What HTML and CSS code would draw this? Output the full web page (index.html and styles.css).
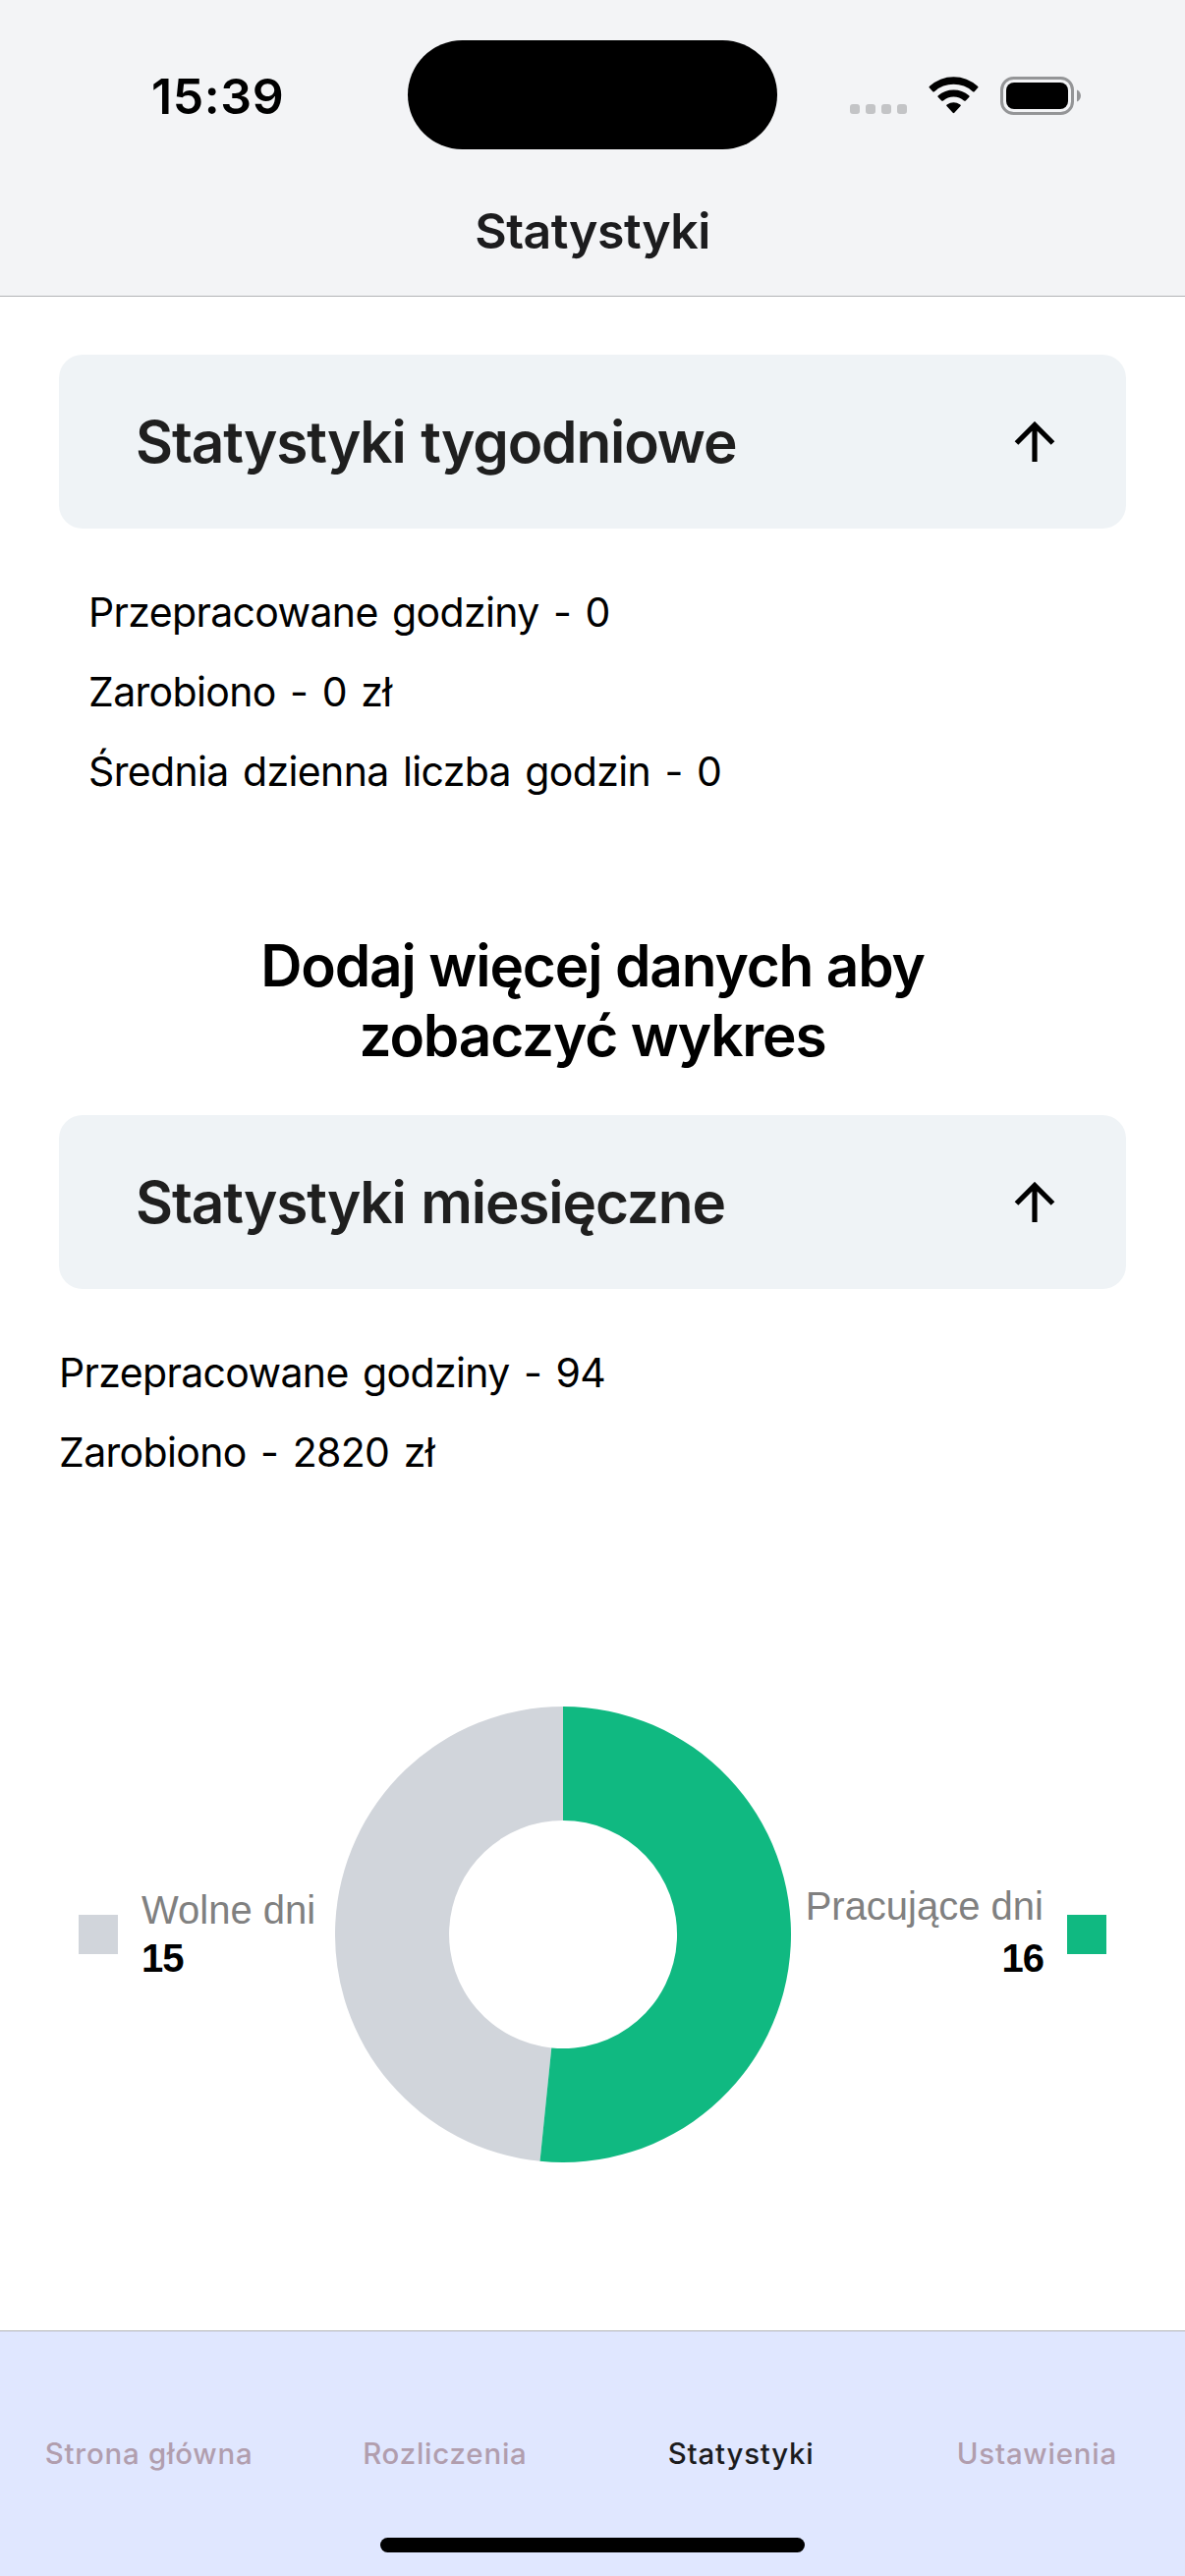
FILE: index.html
```html
<!DOCTYPE html>
<html lang="pl">
<head>
<meta charset="utf-8">
<title>Statystyki</title>
<link rel="stylesheet" href="styles.css">
</head>
<body>
<div class="screen">
  <header class="header">
    <div class="status-bar">
      <div class="status-left"><span class="time">15:39</span></div>
      <div class="island"></div>
      <div class="status-right">
        <svg class="signal" width="58" height="10" viewBox="0 0 58 10" fill="#c3c4c6"><rect width="10" height="10" rx="3"/><rect x="16" width="10" height="10" rx="3"/><rect x="32" width="10" height="10" rx="3"/><rect x="48" width="10" height="10" rx="3"/></svg>
        <svg class="wifi" width="52" height="38" viewBox="0 0 52 38"><path d="M1 11.5Q0 10.700 1 9.800A36 36 0 0 1 50 9.800Q51 10.700 50 11.500L46.700 15.200Q46 16 45 15.200A29 29 0 0 0 6 15.200Q5 16 4.300 15.200ZM9.800 21Q9 20.200 9.800 19.300A24 24 0 0 1 41.200 19.300Q42 20.200 41.200 21L37.800 24.500Q37 25.200 36 24.500A16 16 0 0 0 15 24.500Q14 25.200 13.200 24.500ZM18.500 30Q17.700 29.200 18.700 28.500A12 12 0 0 1 32.300 28.500Q33.300 29.200 32.500 30L26.300 36.800Q25.500 37.600 24.700 36.800Z"/></svg>
        <svg class="battery" width="83" height="40" viewBox="0 0 83 40"><rect x="1.500" y="1.500" width="72" height="36" rx="12" fill="none" stroke="#949597" stroke-width="3"/><rect x="6" y="6" width="63" height="27" rx="8"/><path d="M78 13.500C83.300 15.500 83.300 23.500 78 25.500Z" fill="#949597"/></svg>
      </div>
    </div>
    <h1 class="page-title">Statystyki</h1>
  </header>

  <main class="content">
    <section class="weekly">
      <div class="card">
        <h2 class="card-title">Statystyki tygodniowe</h2>
        <svg class="arrow" width="42" height="42" viewBox="0 0 42 42" fill="none" stroke="#000" stroke-width="5.200"><path d="M21 41V4M2.500 22 21 3.500 39.500 22"/></svg>
      </div>
      <ul class="stats stats-indented">
        <li>Przepracowane godziny - 0</li>
        <li>Zarobiono - 0 zł</li>
        <li>Średnia dzienna liczba godzin - 0</li>
      </ul>
      <p class="empty">Dodaj więcej danych aby<br>zobaczyć wykres</p>
    </section>

    <section class="monthly">
      <div class="card">
        <h2 class="card-title">Statystyki miesięczne</h2>
        <svg class="arrow" width="42" height="42" viewBox="0 0 42 42" fill="none" stroke="#000" stroke-width="5.200"><path d="M21 41V4M2.500 22 21 3.500 39.500 22"/></svg>
      </div>
      <ul class="stats">
        <li>Przepracowane godziny - 94</li>
        <li>Zarobiono - 2820 zł</li>
      </ul>
      <div class="chart">
        <span class="swatch swatch-free"></span>
        <div class="legend legend-free"><span class="legend-name">Wolne dni</span><span class="legend-value">15</span></div>
        <svg class="donut" width="464" height="464" viewBox="-232 -232 464 464">
          <path fill="#d1d5db" d="M0-232A232 232 0 0 0-23.470 230.810L-11.740 115.400A116 116 0 0 1 0-116Z"/>
          <path fill="#10b981" d="M0-232A232 232 0 1 1-23.470 230.810L-11.740 115.400A116 116 0 1 0 0-116Z"/>
        </svg>
        <div class="legend legend-work"><span class="legend-name">Pracujące dni</span><span class="legend-value">16</span></div>
        <span class="swatch swatch-work"></span>
      </div>
    </section>
  </main>

  <footer class="footer">
    <nav class="tabs">
      <a class="tab">Strona główna</a>
      <a class="tab">Rozliczenia</a>
      <a class="tab tab-active">Statystyki</a>
      <a class="tab">Ustawienia</a>
    </nav>
    <div class="home-indicator"></div>
  </footer>
</div>
</body>
</html>
```
FILE: styles.css
```css
* { box-sizing: border-box; margin: 0; padding: 0; }
body { background: #fff; color: #000; font-family: Inter, "Liberation Sans", sans-serif; }
.screen { width: 1206px; height: 2622px; display: flex; flex-direction: column; overflow: hidden; }

.header { height: 302px; background: #f3f4f6; border-bottom: 1px solid #b3b4b6; }
.status-bar { height: 195px; padding-top: 41px; display: grid; grid-template-columns: 415px 376px 415px; align-items: start; }
.status-left { padding-left: 154px; padding-top: 27px; }
.time { display: block; font-size: 50px; line-height: 60px; font-weight: 600; letter-spacing: 0.6px; }
.island { height: 111px; border-radius: 56px; background: #000; }
.status-right { display: flex; align-items: flex-start; padding-left: 74px; padding-top: 37px; }
.signal { margin-top: 28px; }
.wifi { margin-left: 22px; }
.battery { margin-left: 21px; }
.page-title { text-align: center; font-size: 50px; line-height: 80px; font-weight: 600; color: #1c1c1e; letter-spacing: -0.5px; }

.content { flex: 1; padding: 59px 60px 0; }
.card { height: 177px; border-radius: 24px; background: #eff3f6; display: flex; align-items: center; justify-content: space-between; padding: 0 72px 0 78px; }
.card-title { font-size: 58.500px; line-height: 72px; font-weight: 600; color: #1f1f1f; letter-spacing: -1.150px; word-spacing: 2px; }
.stats { list-style: none; padding-top: 45px; }
.stats-indented { padding-left: 30px; }
.stats li { font-size: 41px; line-height: 81px; letter-spacing: -0.650px; word-spacing: 3.500px; }
.empty { margin-top: 121px; text-align: center; font-size: 58.500px; line-height: 71px; font-weight: 600; letter-spacing: -1.150px; }
.monthly { margin-top: 46px; }

.chart { display: flex; align-items: center; padding-left: 20px; margin-top: 218px; }
.swatch { flex: none; width: 40px; height: 40px; }
.swatch-free { background: #d1d5db; }
.swatch-work { background: #10b981; margin-left: 24px; }
.legend { flex: none; display: flex; flex-direction: column; font-family: "Liberation Sans", sans-serif; font-size: 40px; line-height: 49px; white-space: nowrap; }
.legend-name { color: #808080; }
.legend-value { font-weight: 700; letter-spacing: -1px; }
.legend-free { width: 221px; padding-left: 24px; }
.legend-work { width: 257px; align-items: flex-end; }
.legend-work .legend-name { line-height: 52px; margin-top: -6px; padding-bottom: 3px; }
.donut { flex: none; display: block; }

.footer { height: 250px; background: #e0e7ff; border-top: 1px solid #b3b4b6; display: flex; flex-direction: column; align-items: center; }
.tabs { width: 100%; height: 210px; padding-top: 105px; padding-left: 1px; display: grid; grid-template-columns: repeat(4, 1fr); }
.tab { text-align: center; font-size: 29.400px; line-height: 40px; font-weight: 500; letter-spacing: 0.800px; color: #b19eae; white-space: nowrap; }
.tab-active { color: #1c1c1e; }
.home-indicator { width: 432px; height: 15px; border-radius: 8px; background: #000; }
```
